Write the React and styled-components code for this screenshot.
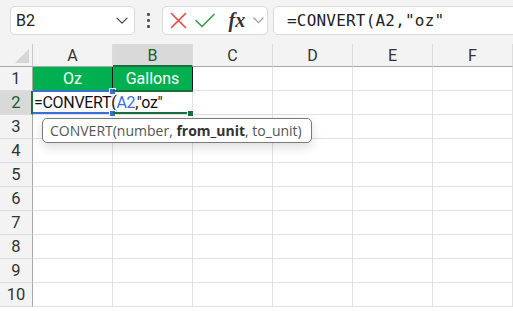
import React from "react";
import styled, { createGlobalStyle } from "styled-components";

const Global = createGlobalStyle`
  html, body { margin: 0; padding: 0; background: #ffffff; overflow: hidden; }
  body { font-family: Roboto, "Liberation Sans", Arial, sans-serif; }
`;

const Page = styled.div`
  width: 513px;
  height: 311px;
  overflow: hidden;
  background: #ffffff;
`;

const Toolbar = styled.div`
  height: 44px;
  box-sizing: border-box;
  padding: 6px 0 0 10px;
  background: #f3f3f3;
  display: flex;
  align-items: flex-start;
  overflow: hidden;
`;

const Box = styled.div`
  height: 29px;
  box-sizing: border-box;
  background: #ffffff;
  border: 1px solid #dadada;
  border-radius: 5px;
  display: flex;
  align-items: center;
  flex-shrink: 0;
`;

const NameBox = styled(Box)`
  width: 125px;
  padding: 0 6px 0 5px;
  justify-content: space-between;
  font-size: 16px;
  color: #222;
`;

const Dots = styled.div`
  width: 27px;
  height: 29px;
  flex-shrink: 0;
  display: flex;
  flex-direction: column;
  align-items: center;
  justify-content: center;
  gap: 3px;
  & > span {
    width: 3px;
    height: 3px;
    background: #555;
    border-radius: 1px;
  }
`;

const FxBox = styled(Box)`
  width: 106px;
  padding: 0 3px 0 7px;
  justify-content: space-between;
`;

const FormulaBox = styled(Box)`
  width: 260px;
  margin-left: 5px;
  padding-left: 13px;
  font-family: "DejaVu Sans Mono", "Liberation Mono", monospace;
  font-size: 16px;
  letter-spacing: 0.2px;
  color: #222;
`;

const Fx = styled.span`
  font-family: "Liberation Serif", "DejaVu Serif", serif;
  font-style: italic;
  font-weight: bold;
  font-size: 20px;
  color: #333;
  margin-left: 6px;
`;

const Sheet = styled.div`
  position: relative;
  display: grid;
  grid-template-columns: 33px repeat(6, 80px);
  grid-template-rows: 23px repeat(10, 24px);
`;

const Corner = styled.div`
  box-sizing: border-box;
  background: #f3f3f3;
  border-right: 1px solid #c8c8c8;
  border-bottom: 1px solid #a8a8a8;
  position: relative;
  &::after {
    content: "";
    position: absolute;
    right: 3px;
    bottom: 3px;
    width: 0;
    height: 0;
    border-left: 14px solid transparent;
    border-bottom: 14px solid #d6d6d6;
  }
`;

const ColHead = styled.div`
  box-sizing: border-box;
  background: ${(p) => (p.$active ? "#d9d9d9" : "#f3f3f3")};
  border-right: 1px solid #dcdcdc;
  border-bottom: ${(p) => (p.$active ? "2px solid #1e6e3c" : "1px solid #a8a8a8")};
  display: flex;
  align-items: center;
  justify-content: center;
  font-size: 16px;
  color: ${(p) => (p.$active ? "#1a5c32" : "#333")};
  padding-top: ${(p) => (p.$active ? "1px" : "0")};
`;

const RowHead = styled.div`
  box-sizing: border-box;
  background: ${(p) => (p.$active ? "#d9d9d9" : "#f3f3f3")};
  border-right: ${(p) => (p.$active ? "2px solid #1e6e3c" : "1px solid #a8a8a8")};
  border-bottom: 1px solid #dcdcdc;
  display: flex;
  align-items: center;
  justify-content: center;
  font-size: 16.5px;
  color: ${(p) => (p.$active ? "#1a5c32" : "#333")};
  padding-left: ${(p) => (p.$active ? "1px" : "0")};
`;

const Cell = styled.div`
  box-sizing: border-box;
  background: ${(p) => (p.$fill ? "#00b050" : "#ffffff")};
  border-right: 1px solid ${(p) => (p.$fill ? "#1b1b1b" : "#e1e1e1")};
  border-bottom: 1px solid ${(p) => (p.$fill ? "#00b050" : "#e1e1e1")};
  color: ${(p) => (p.$fill ? "#ffffff" : "#111")};
  font-size: 16px;
  display: flex;
  align-items: center;
  justify-content: ${(p) => (p.$center ? "center" : "flex-start")};
  white-space: nowrap;
  overflow: visible;
  position: relative;
  z-index: ${(p) => (p.$editing ? 3 : 0)};
`;

const EditText = styled.span`
  padding-left: 1px;
  color: #111;
  font-size: 16px;
  letter-spacing: -0.3px;
  & > b {
    font-weight: normal;
    color: #3a6fd8;
  }
`;

const RangeBox = styled.div`
  position: absolute;
  box-sizing: border-box;
  left: ${(p) => p.$x}px;
  top: ${(p) => p.$y}px;
  width: ${(p) => p.$w}px;
  height: ${(p) => p.$h}px;
  border-top: 2px solid ${(p) => p.$color};
  border-bottom: 2px solid ${(p) => p.$color};
  pointer-events: none;
  z-index: 4;
`;

const Handle = styled.span`
  position: absolute;
  width: 5px;
  height: 5px;
  background: ${(p) => p.$color};
  border: 1px solid #fff;
  left: ${(p) => p.$x}px;
  top: ${(p) => p.$y}px;
`;

const Tip = styled.div`
  position: absolute;
  left: 42px;
  top: 74px;
  height: 25px;
  box-sizing: border-box;
  padding: 0 9px 0 7px;
  background: #ffffff;
  border: 1px solid #7a7a7a;
  border-radius: 5px;
  box-shadow: 0 4px 12px rgba(0, 0, 0, 0.14);
  display: flex;
  align-items: center;
  font-family: "Open Sans", "Liberation Sans", sans-serif;
  font-size: 14px;
  color: #555;
  white-space: nowrap;
  z-index: 5;
  & > b {
    font-weight: bold;
    color: #333;
  }
`;

const Chevron = ({ size = 12, color = "#444" }) => (
  <svg width={size} height={size * 0.6} viewBox="0 0 12 7">
    <path d="M1 1l5 5 5-5" fill="none" stroke={color} strokeWidth="1.3" strokeLinecap="round" strokeLinejoin="round" />
  </svg>
);

const CrossIcon = () => (
  <svg width="17" height="17" viewBox="0 0 17 17">
    <path d="M1.5 1.5l14 14M15.5 1.5l-14 14" stroke="#e6483d" strokeWidth="1.6" strokeLinecap="round" />
  </svg>
);

const CheckIcon = () => (
  <svg width="20" height="15" viewBox="0 0 20 15">
    <path d="M1 7.5l6 6L19 1.5" fill="none" stroke="#3f9b4e" strokeWidth="1.7" strokeLinecap="round" strokeLinejoin="round" />
  </svg>
);

const cols = ["A", "B", "C", "D", "E", "F"];
const rows = Array.from({ length: 10 }, (_, i) => i + 1);

export default function App() {
  return (
    <Page>
      <Global />
      <Toolbar>
        <NameBox>
          <span>B2</span>
          <Chevron />
        </NameBox>
        <Dots>
          <span />
          <span />
          <span />
        </Dots>
        <FxBox>
          <CrossIcon />
          <CheckIcon />
          <Fx>fx</Fx>
          <Chevron size={11} color="#999" />
        </FxBox>
        <FormulaBox>=CONVERT(A2,"oz"</FormulaBox>
      </Toolbar>
      <Sheet>
        <Corner />
        {cols.map((c) => (
          <ColHead key={c} $active={c === "B"}>
            {c}
          </ColHead>
        ))}
        {rows.map((r) => (
          <React.Fragment key={r}>
            <RowHead $active={r === 2}>{r}</RowHead>
            {cols.map((c) => {
              if (r === 1 && c === "A")
                return (
                  <Cell key={c} $fill $center>
                    Oz
                  </Cell>
                );
              if (r === 1 && c === "B")
                return (
                  <Cell key={c} $fill $center>
                    Gallons
                  </Cell>
                );
              if (r === 2 && c === "A")
                return (
                  <Cell key={c} $editing>
                    <EditText>
                      =CONVERT(<b>A2</b>,"oz"
                    </EditText>
                  </Cell>
                );
              return <Cell key={c} />;
            })}
          </React.Fragment>
        ))}
        <RangeBox $x={33} $y={46} $w={80} $h={24} $color="#3a6fd8">
          <Handle $color="#3a6fd8" $x={76} $y={-4} />
          <Handle $color="#3a6fd8" $x={76} $y={18} />
        </RangeBox>
        <RangeBox $x={113} $y={46} $w={80} $h={24} $color="#1e6e3c">
          <Handle $color="#1e6e3c" $x={74} $y={18} />
        </RangeBox>
        <Tip>
          CONVERT(number,&nbsp;<b>from_unit</b>, to_unit)
        </Tip>
      </Sheet>
    </Page>
  );
}
